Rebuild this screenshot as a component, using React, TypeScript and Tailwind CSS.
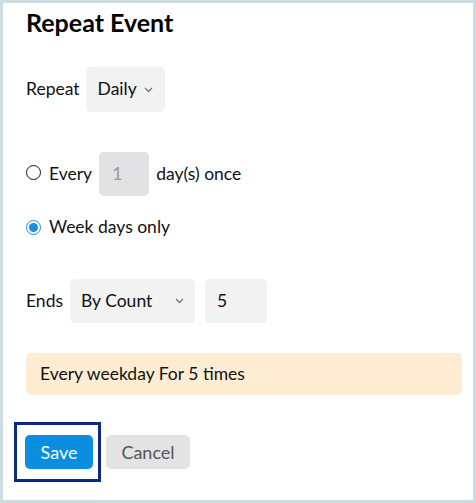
function Chevron() {
  return (
    <svg width="9" height="6" viewBox="0 0 9 6" fill="none" className="shrink-0">
      <path d="M1 1l3.5 3.5L8 1" stroke="#777" strokeWidth="1.3" />
    </svg>
  );
}

function Radio({ checked }: { checked?: boolean }) {
  return checked ? (
    <span className="w-[15px] h-[15px] rounded-full border-[1.5px] border-[#1b8ee0] flex items-center justify-center shrink-0">
      <span className="w-[9px] h-[9px] rounded-full bg-[#1b8ee0]" />
    </span>
  ) : (
    <span className="w-[15px] h-[15px] rounded-full border-[1.5px] border-[#111] shrink-0" />
  );
}

export default function App() {
  return (
    <div
      className="w-[476px] h-[503px] border-[3px] border-[#cfdbe2] bg-white text-[17.5px] text-[#111] overflow-hidden"
      style={{ fontFamily: "Lato, 'Liberation Sans', sans-serif" }}
    >
      <div className="pl-[23px] pr-[12px] pt-[5px]">
        {/* Title */}
        <h1 className="text-[25px] font-bold leading-[29px] text-black">Repeat Event</h1>

        {/* Repeat select */}
        <div className="flex items-center mt-[30px] h-[45px]">
          <span>Repeat</span>
          <div className="ml-[6px] w-[79px] h-[45px] bg-[#f2f2f2] rounded-[5px] flex items-center pl-[12px] gap-[7px]">
            <span>Daily</span>
            <Chevron />
          </div>
        </div>

        {/* Every n days */}
        <div className="flex items-center mt-[40px] h-[44px]">
          <span className="-mt-[3px] flex"><Radio /></span>
          <span className="ml-[8px]">Every</span>
          <div className="ml-[7px] w-[50px] h-[44px] bg-[#e2e2e5] rounded-[5px] flex items-center pl-[13px] text-[#999]">1</div>
          <span className="ml-[7px]">day(s) once</span>
        </div>

        {/* Week days */}
        <div className="flex items-center mt-[19px] h-[24px]">
          <Radio checked />
          <span className="ml-[8px]">Week days only</span>
        </div>

        {/* Ends */}
        <div className="flex items-center mt-[40px] h-[44px]">
          <span>Ends</span>
          <div className="ml-[7px] w-[125px] h-[44px] bg-[#f2f2f2] rounded-[5px] flex items-center justify-between pl-[11px] pr-[11px]">
            <span>By Count</span>
            <Chevron />
          </div>
          <div className="ml-[10px] w-[62px] h-[44px] bg-[#f2f2f2] rounded-[5px] flex items-center pl-[12px]">5</div>
        </div>

        {/* Summary */}
        <div className="mt-[30px] w-[436px] h-[42px] bg-[#feedd2] rounded-[5px] flex items-center pl-[14px]">
          Every weekday For 5 times
        </div>

        {/* Actions */}
        <div className="flex items-center mt-[27px] -ml-[12px]">
          <div className="border-[3px] border-[#0d2a80] pl-[8px] pr-[5px] py-[10px]">
            <button className="w-[68px] h-[34px] bg-[#0b8de0] rounded-[5px] text-white text-[18px]">Save</button>
          </div>
          <button className="ml-[5px] w-[84px] h-[34px] bg-[#e3e3e3] rounded-[5px] text-[#555] text-[18px]">Cancel</button>
        </div>
      </div>
    </div>
  );
}
